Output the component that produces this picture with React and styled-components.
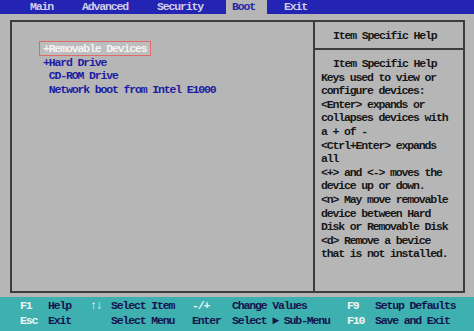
import React from 'react';
import styled, { createGlobalStyle, css } from 'styled-components';

const GlobalStyle = createGlobalStyle`
  html, body {
    margin: 0;
    padding: 0;
    background: #b6b6b6;
  }
  body {
    font-family: "Liberation Mono", "DejaVu Sans Mono", monospace;
    font-weight: bold;
    font-size: 11.5px;
    letter-spacing: -1.15px;
  }
`;

const Screen = styled.div`
  width: 474px;
  height: 331px;
  display: flex;
  flex-direction: column;
  background: #b6b6b6;
  overflow: hidden;
`;

const MenuBar = styled.div`
  display: flex;
  height: 14px;
  padding-left: 24px;
  background: #2424b4;
  line-height: 14px;
`;

const Tab = styled.div`
  padding: 0 12px 0 6px;
  margin-right: 11px;
  color: #cfd0e6;

  ${(props) =>
    props.active &&
    css`
      background: #b6b6b6;
      color: #2626a6;
    `}
`;

const Body = styled.div`
  flex: 1;
  padding: 6px 9px 4px 10px;
  display: flex;
`;

const Frame = styled.div`
  flex: 1;
  display: flex;
  border: 2px solid #3c3c3c;
`;

const LeftPanel = styled.div`
  width: 303px;
  padding: 19px 0 0 30px;
  border-right: 2px solid #3c3c3c;
  box-sizing: border-box;
`;

const Item = styled.div`
  display: inline-block;
  height: 13px;
  line-height: 13px;
  padding: 0 ${(props) => (props.selected ? '3px' : '0')};
  margin-left: ${(props) => (props.plus ? '0' : '5.75px')};
  color: #1c1ca2;
  border: 1px solid transparent;

  ${(props) =>
    props.selected &&
    css`
      color: #f4f4f4;
      border-color: #e06a6a;
      background: #bdbdbd;
      margin-left: -3px;
    `}
`;

const ItemRow = styled.div`
  height: 13.6px;
`;

const RightPanel = styled.div`
  flex: 1;
  display: flex;
  flex-direction: column;
`;

const HelpHeader = styled.div`
  height: 26px;
  line-height: 27px;
  padding-left: 18px;
  color: #161616;
  border-bottom: 2px solid #3c3c3c;
`;

const HelpBody = styled.div`
  padding: 7px 0 0 6px;
  color: #161616;
  line-height: 13.6px;
  white-space: pre;
`;

const HelpTitle = styled.div`
  padding-left: 12px;
`;

const KeyBar = styled.div`
  height: 34px;
  background: #3eb0b0;
  padding: 1px 0 0 20px;
  box-sizing: border-box;
  display: grid;
  grid-template-columns: 28px 42px 21px 81px 40px 115px 28px 1fr;
  grid-auto-rows: 15px;
  line-height: 15px;
`;

const Key = styled.div`
  color: ${(props) => (props.light ? '#f2f2f2' : '#14144e')};
  white-space: pre;
`;

const items = [
  { label: '+Removable Devices', plus: true, selected: true },
  { label: '+Hard Drive', plus: true },
  { label: 'CD-ROM Drive' },
  { label: 'Network boot from Intel E1000' },
];

const helpLines = [
  'Keys used to view or',
  'configure devices:',
  '<Enter> expands or',
  'collapses devices with',
  'a + of -',
  '<Ctrl+Enter> expands',
  'all',
  '<+> and <-> moves the',
  'device up or down.',
  '<n> May move removable',
  'device between Hard',
  'Disk or Removable Disk',
  '<d> Remove a bevice',
  'that is not installed.',
];

const tabs = ['Main', 'Advanced', 'Security', 'Boot', 'Exit'];

export default function App() {
  return (
    <Screen>
      <GlobalStyle />
      <MenuBar>
        {tabs.map((t) => (
          <Tab key={t} active={t === 'Boot'}>
            {t}
          </Tab>
        ))}
      </MenuBar>
      <Body>
        <Frame>
          <LeftPanel>
            {items.map((it) => (
              <ItemRow key={it.label}>
                <Item plus={it.plus} selected={it.selected}>
                  {it.label}
                </Item>
              </ItemRow>
            ))}
          </LeftPanel>
          <RightPanel>
            <HelpHeader>Item Specific Help</HelpHeader>
            <HelpBody>
              <HelpTitle>Item Specific Help</HelpTitle>
              {helpLines.map((l, i) => (
                <div key={i}>{l}</div>
              ))}
            </HelpBody>
          </RightPanel>
        </Frame>
      </Body>
      <KeyBar>
        <Key light>F1</Key>
        <Key>Help</Key>
        <Key light>↑↓</Key>
        <Key>Select Item</Key>
        <Key light>-/+</Key>
        <Key>Change Values</Key>
        <Key light>F9</Key>
        <Key>Setup Defaults</Key>
        <Key light>Esc</Key>
        <Key>Exit</Key>
        <Key light></Key>
        <Key>Select Menu</Key>
        <Key>Enter</Key>
        <Key>Select ► Sub-Menu</Key>
        <Key light>F10</Key>
        <Key>Save and Exit</Key>
      </KeyBar>
    </Screen>
  );
}
